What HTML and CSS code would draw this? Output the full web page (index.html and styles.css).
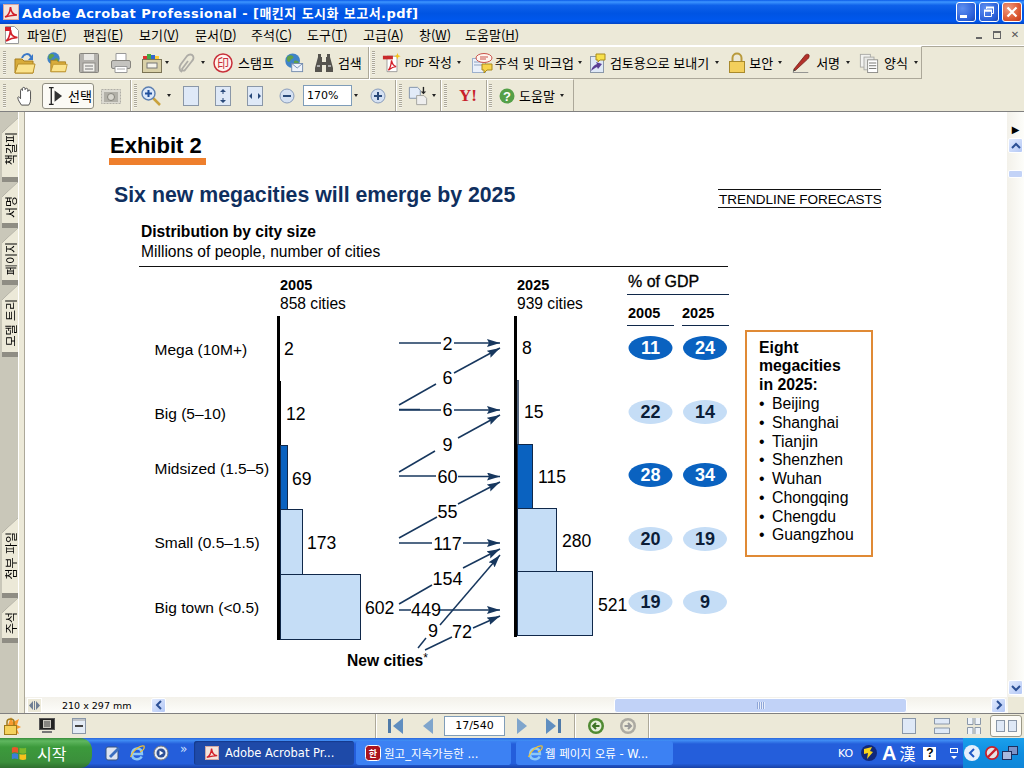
FILE: index.html
```html
<!DOCTYPE html>
<html lang="ko">
<head>
    <meta charset="utf-8">
    <title>Adobe Acrobat Professional</title>
    <link rel="stylesheet" href="styles.css">
</head>
<body>
    <svg class="defs" width="0" height="0">
        <symbol id="acro" viewBox="0 0 16 16">
            <rect x="0.5" y="0.5" width="15" height="15" fill="#f4e4dc" stroke="#d9a9a0"/>
            <path d="M2 13c3-1 5-5 5.500-10 .5 5 3 8 6.500 8-4 0-8 1-12 2z" fill="none" stroke="#d3202a" stroke-width="1.600"/>
        </symbol>
        <symbol id="folder" viewBox="0 0 22 22">
            <path d="M1 7h7l2 2h9v12H1z" fill="#d8ac3a" stroke="#a67c1e"/>
            <path d="M1 21l3-9h17l-2 9z" fill="#fbe38c" stroke="#b98f2a"/>
        </symbol>
        <symbol id="globe" viewBox="0 0 20 20">
            <circle cx="10" cy="10" r="9.500" fill="#3f83c8"/>
            <path d="M4 4c3-2 6-1 7 1s-3 3-4 5-3 2-4 0-1-4 1-6zM12 10c3-1 5 0 6 2-1 3-3 5-5 5-1-2-2-5-1-7z" fill="#5fa04a"/>
        </symbol>
        <symbol id="pagebtn" viewBox="0 0 16 20">
            <rect x="0.500" y="0.500" width="15" height="19" fill="#dfe9f7" stroke="#8a97a8"/>
        </symbol>
        <symbol id="ie" viewBox="0 0 16 16">
            <path d="M3.500 9h9.500c0-3.500-2-5.500-4.800-5.500S3 5.500 3 9s2.200 5.300 5 5.300c2 0 3.800-1 4.700-2.800" fill="none" stroke="#8cc8f8" stroke-width="2.400"/>
            <path d="M1.500 12C4 5 11 0 15 1c1 3-2 5-4 6" fill="none" stroke="#f2c230" stroke-width="1.200"/>
        </symbol>
    </svg>

    <header class="titlebar">
        <svg class="ic16" viewBox="0 0 16 16"><use href="#acro"/></svg>
        <span class="title-text">Adobe Acrobat Professional - [매킨지 도시화 보고서.pdf]</span>
        <div class="win-btns">
            <span class="win-btn"><i class="glyph-min"></i></span>
            <span class="win-btn">
                <svg viewBox="0 0 12 12" width="12" height="12"><path d="M3.500 3V1.500h7v6H9" fill="none" stroke="#fff"/><path d="M3 1.500h8" stroke="#fff" stroke-width="2"/><path d="M1.500 5h7v5.500h-7z" fill="none" stroke="#fff"/><path d="M1 4.500h8" stroke="#fff" stroke-width="2"/></svg>
            </span>
            <span class="win-btn win-close">
                <svg viewBox="0 0 12 12" width="12" height="12"><path d="M1.500 1.500l9 9M10.500 1.500l-9 9" stroke="#fff" stroke-width="2.200"/></svg>
            </span>
        </div>
    </header>

    <nav class="menubar">
        <svg class="menu-logo" viewBox="0 0 14 18">
            <path d="M0.500 0.500h9l4 4v13h-13z" fill="#fff" stroke="#9a9a9a"/>
            <path d="M1 15c3-2 4-6 4.500-11 .5 5 2 7 7 7.500-4 .2-8 1.500-11.500 3.500z" fill="none" stroke="#d3202a" stroke-width="1.700"/>
            <rect x="0" y="1" width="6" height="4" fill="#d3202a"/>
        </svg>
        <a class="menu-item">파일(<u>F</u>)</a>
        <a class="menu-item">편집(<u>E</u>)</a>
        <a class="menu-item">보기(<u>V</u>)</a>
        <a class="menu-item">문서(<u>D</u>)</a>
        <a class="menu-item">주석(<u>C</u>)</a>
        <a class="menu-item">도구(<u>T</u>)</a>
        <a class="menu-item">고급(<u>A</u>)</a>
        <a class="menu-item menu-short">창(<u>W</u>)</a>
        <a class="menu-item">도움말(<u>H</u>)</a>
        <div class="mdi-btns">
            <span class="mdi-btn"><i class="mdi-min"></i></span>
            <span class="mdi-btn"><i class="mdi-restore"></i></span>
            <span class="mdi-btn mdi-x">✕</span>
        </div>
    </nav>

    <!-- 1번째 도구 모음 -->
    <div class="toolbar tb-first">
        <i class="handle"></i>
        <svg class="ic22 ml8" viewBox="0 0 22 22"><use href="#folder"/><path d="M8 6c2-5 7-5 9-1" fill="none" stroke="#3a78c8" stroke-width="2"/><path d="M19 2v6h-5z" fill="#3a78c8"/></svg>
        <svg class="ic22 ml10" viewBox="0 0 22 22"><use href="#globe" width="13" height="13" x="1" y="0"/><use href="#folder" x="4" y="1" width="18" height="21"/></svg>
        <svg class="ic22 ml10" viewBox="0 0 22 22"><rect x="1.500" y="1.500" width="19" height="19" rx="1" fill="#b3b1ac" stroke="#86847e"/><rect x="6" y="2" width="10" height="6" fill="#e9e8e4"/><rect x="5" y="11" width="12" height="9" fill="#f0efeb" stroke="#8f8d87"/><path d="M7 14h8M7 17h8" stroke="#777"/></svg>
        <svg class="ic22 ml10" viewBox="0 0 22 22"><path d="M6 1.500h10v7H6z" fill="#fff" stroke="#999"/><rect x="1.500" y="8.500" width="19" height="8" rx="1.500" fill="#c4c3bf" stroke="#87857f"/><path d="M5 14.500h12v6H5z" fill="#fff" stroke="#999"/><path d="M7 17h8" stroke="#aaa"/></svg>
        <svg class="ic22 ml9" viewBox="0 0 22 22"><path d="M2 4h4v4H2z" fill="#d33"/><path d="M6 2h4v6H6z" fill="#4a4"/><path d="M10 3h4v5h-4z" fill="#36c"/><path d="M14 4h4v4h-4z" fill="#fc3"/><rect x="1.500" y="7.500" width="19" height="13" fill="#d9d0a8" stroke="#7b7355"/><rect x="6" y="11" width="10" height="5" fill="#f6f4ea" stroke="#777"/></svg>
        <i class="caret ml2"></i>
        <svg class="ic18 ml8" viewBox="0 0 18 22"><path d="M5 20c-3-2-3-5-1-8l6-8c2-2 5-2 6 0s0 4-1 5l-7 9c-1 1-3 1-3-1l6-8" fill="none" stroke="#aeaca6" stroke-width="1.800"/></svg>
        <i class="caret ml6"></i>
        <svg class="ic20 ml8" viewBox="0 0 20 20"><circle cx="10" cy="10" r="9" fill="#fff3ee" stroke="#c8303a" stroke-width="1.500"/><text x="10" y="14.500" text-anchor="middle" class="ic-stamp">印</text></svg>
        <span class="lbl ml5">스탬프</span>
        <svg class="ic20 ml10" viewBox="0 0 20 22"><use href="#globe" width="17" height="17"/><rect x="7.500" y="11.500" width="12" height="9" fill="#eef3fb" stroke="#6f89ad"/><path d="M7.500 11.500l6 5 6-5" fill="none" stroke="#6f89ad"/></svg>
        <svg class="ic20 ml10" viewBox="0 0 20 20"><path d="M4 1h3v3h1v5h4V4h1V1h3v3l3 11v4h-7v-7H8v7H1v-4L4 4z" fill="#55534e"/><path d="M3 13h3M14 13h3" stroke="#aaa" stroke-width="2"/></svg>
        <span class="lbl ml4">검색</span>
        <i class="sep ml6"></i>
        <i class="handle ml3"></i>
        <svg class="ic20 ml7" viewBox="0 0 20 22"><path d="M4.500 3.500h11v17h-11z" fill="#fff" stroke="#999"/><rect x="0" y="3" width="11" height="4" fill="#c92a2a"/><path d="M6 19c2-2 3-6 3.500-11 .5 4 2 6 5 7-3 0-6 2-8.500 4z" fill="none" stroke="#d3202a" stroke-width="1.500"/><path d="M16 0l1 2.500 2.500 1-2.500 1-1 2.500-1-2.500-2.500-1 2.500-1z" fill="#f6c21c"/></svg>
        <span class="lbl ml3"><span class="latin">PDF</span> 작성</span>
        <i class="caret ml5"></i>
        <svg class="ic22 ml10" viewBox="0 0 22 22"><rect x="1.500" y="6.500" width="13" height="14" fill="#eaf0fa" stroke="#9db0cc"/><path d="M3 10h9M3 13h9" stroke="#8fa3c0"/><ellipse cx="13" cy="6" rx="8" ry="4.500" fill="#fff4ee" stroke="#c9534a"/><path d="M9 5h8M9 7h6" stroke="#c9534a"/><path d="M11 12h10v6h-5l-3 3v-3h-2z" fill="#f7d34a" stroke="#a98a1c"/></svg>
        <span class="lbl ml2">주석 및 마크업</span>
        <i class="caret ml4"></i>
        <svg class="ic16 pg ml8" viewBox="0 0 16 20"><rect x="0.500" y="3.500" width="13" height="16" fill="#dfe9f7" stroke="#8a97a8"/><path d="M6 1h9v6h-5l-2 2V7H6z" fill="#f7e04a" stroke="#a98a1c"/><path d="M1 18c1-4 3-6 6-7l-1-2 6 2-4 5-1-2c-2 1-4 2-6 4z" fill="#5b3f94"/></svg>
        <span class="lbl ml4">검토용으로 보내기</span>
        <i class="caret ml6"></i>
        <svg class="ic18 ml9" viewBox="0 0 18 22"><path d="M4.500 10V6c0-6 9-6 9 0v4" fill="none" stroke="#b99a3c" stroke-width="2"/><rect x="1.500" y="9.500" width="15" height="11" fill="#f3cf5c" stroke="#a98a2c"/></svg>
        <span class="lbl ml3">보안</span>
        <i class="caret ml5"></i>
        <svg class="ic20 ml9" viewBox="0 0 20 22"><path d="M2 18L15 2c1-1 4-1 4 1s-1 3-2 4L4 19z" fill="#b3312a" stroke="#6e1a14" stroke-width=".800"/><path d="M2 18l-1 3 3-2z" fill="#333"/><path d="M1 21.500h17" stroke="#888"/></svg>
        <span class="lbl ml5">서명</span>
        <i class="caret ml6"></i>
        <svg class="ic20 ml9" viewBox="0 0 20 22"><rect x="0.500" y="1.500" width="11" height="14" fill="#f2f2f0" stroke="#a9a9a5"/><rect x="4.500" y="4.500" width="11" height="14" fill="#e8e8e6" stroke="#a9a9a5"/><rect x="8.500" y="7.500" width="11" height="14" fill="#fff" stroke="#8a8a86"/><path d="M10 11h8M10 14h8M10 17h8" stroke="#6c6c68"/></svg>
        <span class="lbl ml5">양식</span>
        <i class="caret ml6"></i>
    </div>

    <!-- 2번째 도구 모음 -->
    <div class="toolbar tb-second">
        <i class="handle"></i>
        <svg class="ic20 ml10" viewBox="0 0 20 22"><path d="M5 21c-2-3-4-6-4-8s2-1 3 1V5c0-2 2-2 2 0V3c0-2 3-2 3 0v1c0-2 3-2 3 0v2c0-2 3-2 3 0v9c0 3-1 4-2 6z" fill="#fff" stroke="#444"/></svg>
        <span class="select-btn ml6">
            <svg class="ic15" viewBox="0 0 16 20"><path d="M1 1h5M1 19h5M3.500 1v18" stroke="#222" stroke-width="1.400" fill="none"/><path d="M7 4l8 6-8 6z" fill="#333"/></svg>
            <span class="lbl ml5">선택</span>
        </span>
        <svg class="ic20 ml7" viewBox="0 0 20 20"><rect x="0.500" y="3.500" width="19" height="14" fill="#dcdad2" stroke="#b0aea6" stroke-dasharray="2 1"/><rect x="3" y="6" width="14" height="10" fill="#b2b0a8"/><circle cx="10" cy="11" r="3.500" fill="#d8d6ce" stroke="#85837b"/></svg>
        <i class="sep ml9"></i>
        <i class="handle ml3"></i>
        <svg class="ic20 ml4" viewBox="0 0 20 20"><path d="M11 11l8 8" stroke="#c9a23c" stroke-width="2.500"/><circle cx="7.500" cy="7.500" r="6.500" fill="#dbe8fa" stroke="#5c7fb0" stroke-width="1.400"/><path d="M4 7.500h7M7.500 4v7" stroke="#1f4f9c" stroke-width="2"/></svg>
        <i class="caret ml6"></i>
        <svg class="ic16 pg ml12" viewBox="0 0 16 20"><use href="#pagebtn"/></svg>
        <svg class="ic16 pg ml16" viewBox="0 0 16 20"><use href="#pagebtn"/><path d="M8 3l-3 3h6zM8 17l-3-3h6z" fill="#2a4a7a"/><path d="M8 5v3M8 12v3" stroke="#2a4a7a"/></svg>
        <svg class="ic16 pg ml16" viewBox="0 0 16 20"><use href="#pagebtn"/><path d="M2 10l3-3v6zM14 10l-3-3v6z" fill="#2a4a7a"/></svg>
        <svg class="ic16 ml16" viewBox="0 0 16 16"><circle cx="8" cy="8" r="7" fill="#d5e1f2" stroke="#8a9dbb"/><path d="M4 8h8" stroke="#2a4a7a" stroke-width="2"/></svg>
        <span class="zoom-box ml8">170%</span>
        <i class="caret ml2"></i>
        <svg class="ic16 ml12" viewBox="0 0 16 16"><circle cx="8" cy="8" r="7" fill="#d5e1f2" stroke="#8a9dbb"/><path d="M4 8h8M8 4v8" stroke="#2a4a7a" stroke-width="2"/></svg>
        <i class="sep ml9"></i>
        <i class="handle ml3"></i>
        <svg class="ic20 ml6" viewBox="0 0 22 22"><path d="M1.500 1.500h9l3 3v9h-12z" fill="#e2ebf8" stroke="#7d8ea8"/><path d="M9.500 10.500h8l3 3v7h-11z" fill="#eee" stroke="#a0a09a"/><path d="M17 1v6" stroke="#222" stroke-width="1.500"/><path d="M14 6l3 3 3-3z" fill="#222"/></svg>
        <i class="caret ml4"></i>
        <i class="sep ml4"></i>
        <i class="handle ml3"></i>
        <span class="yahoo ml12">Y!</span>
        <i class="sep ml7"></i>
        <i class="handle ml2"></i>
        <svg class="ic16 ml7" viewBox="0 0 16 16"><circle cx="8" cy="8" r="7.500" fill="#55a048"/><text x="8" y="12.500" text-anchor="middle" class="ic-help">?</text></svg>
        <span class="lbl ml4">도움말</span>
        <i class="caret ml5"></i>
    </div>
    <div class="rule"></div>

    <main class="workspace">
        <aside class="rail">
            <div class="rail-group">
                <div class="side-tab tab-book"><span>책갈피</span></div>
                <div class="side-tab tab-sign"><span>서명</span></div>
                <div class="side-tab tab-page"><span>페이지</span></div>
                <div class="side-tab tab-model"><span>모델 트리</span></div>
            </div>
            <div class="rail-group">
                <div class="side-tab tab-file"><span>첨부 파일</span></div>
                <div class="side-tab tab-note"><span>주석</span></div>
            </div>
        </aside>
        <div class="gutter"></div>

        <div class="viewer">
            <div class="viewer-top">
                <svg class="page" viewBox="25 112 982 585" width="982" height="585">
                    <defs>
                        <marker id="arrow" markerWidth="14" markerHeight="10" refX="13" refY="4" orient="auto" markerUnits="userSpaceOnUse">
                            <path d="M0 0l13 4-13 4 2-4z" fill="#17375e"/>
                        </marker>
                    </defs>

                    <text x="110" y="153" class="t-exhibit">Exhibit 2</text>
                    <rect x="109" y="158" width="97" height="7" fill="#ee7f2d"/>
                    <text x="114" y="202" class="t-title">Six new megacities will emerge by 2025</text>

                    <path d="M718 189.500h163M718 207.500h163" stroke="#111"/>
                    <text x="719" y="204" class="t-trend">TRENDLINE FORECASTS</text>

                    <text x="141" y="237" class="t-sub-b">Distribution by city size</text>
                    <text x="141" y="257" class="t-sub">Millions of people, number of cities</text>
                    <path d="M139 266.500h589" stroke="#111"/>

                    <text x="280" y="290" class="t-year">2005</text>
                    <text x="280" y="309" class="t-sub">858 cities</text>
                    <text x="517" y="290" class="t-year">2025</text>
                    <text x="517" y="309" class="t-sub">939 cities</text>

                    <text x="628" y="287" class="t-gdp">% of GDP</text>
                    <path d="M627 294.500h102M627 325.500h47M682 325.500h47" stroke="#10284a"/>
                    <text x="628" y="318" class="t-year">2005</text>
                    <text x="682" y="318" class="t-year">2025</text>

                    <!-- 왼쪽 라벨 -->
                    <text x="154.500" y="355" class="t-cat">Mega (10M+)</text>
                    <text x="154.500" y="419" class="t-cat">Big (5–10)</text>
                    <text x="154.500" y="474" class="t-cat">Midsized (1.5–5)</text>
                    <text x="154.500" y="548" class="t-cat">Small (0.5–1.5)</text>
                    <text x="154.500" y="613" class="t-cat">Big town (&lt;0.5)</text>

                    <!-- 2005 막대 -->
                    <rect class="bar-dark" x="280.500" y="445.500" width="7" height="64"/>
                    <rect class="bar-light" x="280.500" y="509.500" width="22" height="65"/>
                    <rect class="bar-light" x="280.500" y="574.500" width="80" height="65"/>
                    <path d="M278.500 316v324" stroke="#000" stroke-width="3"/>
                    <path d="M280.500 381v64" stroke="#000"/>

                    <!-- 2025 막대 -->
                    <rect x="517.500" y="380.500" width="1" height="64" fill="#fff" stroke="#10284a" stroke-width=".700"/>
                    <rect class="bar-dark" x="517.500" y="444.500" width="15" height="64"/>
                    <rect class="bar-light" x="517.500" y="508.500" width="39" height="63"/>
                    <rect class="bar-light" x="517.500" y="571.500" width="75" height="64"/>
                    <path d="M515.500 316v321" stroke="#000" stroke-width="3"/>

                    <text x="284" y="355" class="t-num">2</text>
                    <text x="286" y="420" class="t-num">12</text>
                    <text x="292" y="485" class="t-num">69</text>
                    <text x="307" y="549" class="t-num">173</text>
                    <text x="365" y="614" class="t-num">602</text>
                    <text x="522" y="354" class="t-num">8</text>
                    <text x="524" y="418" class="t-num">15</text>
                    <text x="538" y="483" class="t-num">115</text>
                    <text x="562" y="547" class="t-num">280</text>
                    <text x="598" y="611" class="t-num">521</text>

                    <!-- 화살표 -->
                    <g class="flow">
                        <path d="M399 343H441"/><path d="M454 343H500" marker-end="url(#arrow)"/>
                        <path d="M399 405L436 384"/><path d="M454 373L500 348" marker-end="url(#arrow)"/>
                        <path d="M399 410H441"/><path d="M399 409.500H420"/><path d="M454 410H500" marker-end="url(#arrow)"/>
                        <path d="M399 472L435 451"/><path d="M458 438L500 415" marker-end="url(#arrow)"/>
                        <path d="M399 476H436"/><path d="M458 476.500H500" marker-end="url(#arrow)"/>
                        <path d="M399 538L437 517"/><path d="M458 504L500 482" marker-end="url(#arrow)"/>
                        <path d="M399 543H432"/><path d="M463 543H500" marker-end="url(#arrow)"/>
                        <path d="M399 604L432 585"/><path d="M463 568L500 549" marker-end="url(#arrow)"/>
                        <path d="M399 610H411"/><path d="M440 610H500" marker-end="url(#arrow)"/>
                        <path d="M418 648L426 638"/><path d="M440 625L500 555" marker-end="url(#arrow)"/>
                        <path d="M425 650L452 637"/><path d="M473 628L500 616" marker-end="url(#arrow)"/>
                    </g>
                    <g class="t-flow">
                        <text x="447.500" y="350">2</text>
                        <text x="447.500" y="384">6</text>
                        <text x="447.500" y="416">6</text>
                        <text x="447.500" y="451">9</text>
                        <text x="447.500" y="483">60</text>
                        <text x="447.500" y="518">55</text>
                        <text x="447.500" y="550">117</text>
                        <text x="447.500" y="585">154</text>
                        <text x="426" y="616">449</text>
                        <text x="433" y="637">9</text>
                        <text x="462" y="638">72</text>
                    </g>
                    <text x="347" y="666" class="t-new">New cities<tspan class="t-star" dy="-4">*</tspan></text>

                    <!-- GDP 타원 -->
                    <g class="dot-dark"><ellipse cx="650.500" cy="348" rx="22" ry="12"/><ellipse cx="705" cy="348" rx="22" ry="12"/><ellipse cx="650.500" cy="475" rx="22" ry="12"/><ellipse cx="705" cy="475" rx="22" ry="12"/></g>
                    <g class="dot-light"><ellipse cx="650.500" cy="412" rx="22" ry="12"/><ellipse cx="705" cy="412" rx="22" ry="12"/><ellipse cx="650.500" cy="539" rx="22" ry="12"/><ellipse cx="705" cy="539" rx="22" ry="12"/><ellipse cx="650.500" cy="602" rx="22" ry="12"/><ellipse cx="705" cy="602" rx="22" ry="12"/></g>
                    <g class="t-dot t-white">
                        <text x="650.500" y="354">11</text><text x="705" y="354">24</text>
                        <text x="650.500" y="481">28</text><text x="705" y="481">34</text>
                    </g>
                    <g class="t-dot">
                        <text x="650.500" y="418">22</text><text x="705" y="418">14</text>
                        <text x="650.500" y="545">20</text><text x="705" y="545">19</text>
                        <text x="650.500" y="608">19</text><text x="705" y="608">9</text>
                    </g>

                    <!-- 메가시티 상자 -->
                    <rect x="746" y="331" width="126" height="225" fill="none" stroke="#e08a35" stroke-width="2"/>
                    <text x="759" y="353" class="t-box-b">Eight</text>
                    <text x="759" y="371" class="t-box-b">megacities</text>
                    <text x="759" y="390" class="t-box-b">in 2025:</text>
                    <g class="t-box">
                        <text x="759" y="409">•</text><text x="772" y="409">Beijing</text>
                        <text x="759" y="428">•</text><text x="772" y="428">Shanghai</text>
                        <text x="759" y="447">•</text><text x="772" y="447">Tianjin</text>
                        <text x="759" y="465">•</text><text x="772" y="465">Shenzhen</text>
                        <text x="759" y="484">•</text><text x="772" y="484">Wuhan</text>
                        <text x="759" y="503">•</text><text x="772" y="503">Chongqing</text>
                        <text x="759" y="522">•</text><text x="772" y="522">Chengdu</text>
                        <text x="759" y="540">•</text><text x="772" y="540">Guangzhou</text>
                    </g>
                </svg>

                <div class="vscroll">
                    <span class="nav-arrow">▶</span>
                    <span class="sb-btn"><svg viewBox="0 0 10 8" width="10" height="8"><path d="M1 6l4-4 4 4" fill="none" stroke="#2b4f94" stroke-width="2"/></svg></span>
                    <span class="vthumb"></span>
                    <span class="sb-btn sb-bottom"><svg viewBox="0 0 10 8" width="10" height="8"><path d="M1 2l4 4 4-4" fill="none" stroke="#2b4f94" stroke-width="2"/></svg></span>
                </div>
            </div>

            <div class="hscroll">
                <span class="split-btn"><svg viewBox="0 0 11 9" width="11" height="9"><path d="M4 0v9L0 4.500zM7 0v9l4-4.500z" fill="#6f7f95"/><path d="M5.500 0v9" stroke="#6f7f95"/></svg></span>
                <span class="page-size">210 x 297 mm</span>
                <span class="sb-btn sb-left"><svg viewBox="0 0 8 10" width="8" height="10"><path d="M6 1L2 5l4 4" fill="none" stroke="#2b4f94" stroke-width="2"/></svg></span>
                <span class="hthumb"><i class="grip"></i></span>
                <span class="sb-btn sb-right"><svg viewBox="0 0 8 10" width="8" height="10"><path d="M2 1l4 4-4 4" fill="none" stroke="#2b4f94" stroke-width="2"/></svg></span>
            </div>
        </div>
    </main>

    <div class="statusbar">
        <svg class="ic18 st-lock" viewBox="0 0 18 20"><path d="M5 9l3-8 2 5 6-3-2 6 4 2-4 2 2 5-6-2-5 3z" fill="#f79a2e"/><path d="M4 9V6c0-4 7-4 7 0v3" fill="none" stroke="#a07a1c" stroke-width="1.500"/><rect x="1.500" y="9.500" width="12" height="9" fill="#f5d25c" stroke="#a07a1c"/></svg>
        <svg class="ic16 st-mon" viewBox="0 0 16 16"><rect x="0.500" y="0.500" width="15" height="11" fill="#222" stroke="#555"/><rect x="4" y="2" width="8" height="8" fill="#c9c7bf"/><path d="M5 4h6M5 6h6M5 8h6" stroke="#444"/><path d="M3 14h10" stroke="#777" stroke-width="2"/></svg>
        <svg class="ic14 st-doc" viewBox="0 0 14 16"><rect x="0.500" y="0.500" width="13" height="15" fill="#e4ecf6" stroke="#8a97a8"/><path d="M3 8h8" stroke="#444" stroke-width="2"/><path d="M1 2h12" stroke="#999"/></svg>

        <i class="sep st-sep1"></i>
        <svg class="ic16 st-first" viewBox="0 0 16 16"><rect x="0" y="1" width="3" height="14" fill="#4f7aa8"/><path d="M15 0v16L5 8z" fill="#5f8ec0"/></svg>
        <svg class="ic10 st-prev" viewBox="0 0 10 16"><path d="M10 0v16L0 8z" fill="#7fa5cc"/></svg>
        <span class="page-box">17/540</span>
        <svg class="ic10 st-next" viewBox="0 0 10 16"><path d="M0 0v16l10-8z" fill="#7fa5cc"/></svg>
        <svg class="ic16 st-last" viewBox="0 0 16 16"><path d="M1 0v16l10-8z" fill="#5f8ec0"/><rect x="13" y="1" width="3" height="14" fill="#4f7aa8"/></svg>
        <i class="sep st-sep2"></i>
        <svg class="ic16 st-back" viewBox="0 0 16 16"><circle cx="8" cy="8" r="8" fill="#4f8a32"/><circle cx="8" cy="8" r="5.500" fill="#e6f0dc"/><path d="M11.500 8H6M8 5L5 8l3 3" fill="none" stroke="#3d7426" stroke-width="2"/></svg>
        <svg class="ic16 st-fwd" viewBox="0 0 16 16"><circle cx="8" cy="8" r="8" fill="#acaaa2"/><circle cx="8" cy="8" r="5.500" fill="#ece9d8"/><path d="M4.500 8H10M8 5l3 3-3 3" fill="none" stroke="#999" stroke-width="2"/></svg>
        <i class="sep st-sep3"></i>

        <svg class="ic14 st-v1" viewBox="0 0 14 16"><rect x="0.500" y="0.500" width="13" height="15" fill="#dfe9f7" stroke="#8a97a8"/></svg>
        <svg class="ic16 st-v2" viewBox="0 0 16 16"><path d="M1 .5h14M1 15.500h14M.5 0v6h15V0M.5 16v-6h15v6" fill="#dfe9f7" stroke="#8a97a8"/></svg>
        <svg class="ic14 st-v3" viewBox="0 0 14 16"><path d="M.5 0v6.500h5.500V0M8 0v6.500h5.500V0M.5 16V9.500h5.500V16M8 16V9.500h5.500V16" fill="#eef3fa" stroke="#8a97a8"/></svg>
        <span class="view-facing"><i></i><i></i></span>
    </div>

    <footer class="taskbar">
        <div class="start-btn">
            <svg class="ic16" viewBox="0 0 18 18"><path d="M1 3c2-1 4-1 7 0v6c-3-1-5-1-7 0z" fill="#e8562a"/><path d="M9.500 3c2 1 5 1 7.500 0v6c-2 1-5 1-7.500 0z" fill="#7ab92c"/><path d="M1 10c2-1 4-1 7 0v6c-3-1-5-1-7 0z" fill="#3c7ed8"/><path d="M9.500 10c2 1 5 1 7.500 0v6c-2 1-5 1-7.500 0z" fill="#f6c21c"/></svg>
            <span>시작</span>
        </div>
        <div class="quick">
            <svg class="ic16" viewBox="0 0 16 16"><rect x="1" y="2" width="12" height="13" rx="2" fill="#dbe4f2" stroke="#36537f"/><path d="M4 11L13 2l2 2-9 9z" fill="#3a6fc0"/></svg>
            <svg class="ic16" viewBox="0 0 16 16"><use href="#ie"/></svg>
            <svg class="ic16" viewBox="0 0 16 16"><circle cx="8" cy="8" r="7" fill="#e8edf5" stroke="#777"/><circle cx="8" cy="8" r="4.500" fill="#2c4f96"/><path d="M6.500 5.500v5l4-2.500z" fill="#fff"/></svg>
            <span class="chev">»</span>
        </div>
        <div class="task-btn task-active">
            <svg class="ic14" viewBox="0 0 16 16"><use href="#acro"/></svg>
            <span>Adobe Acrobat Pr...</span>
        </div>
        <div class="task-btn task-second">
            <svg class="ic16" viewBox="0 0 16 16"><rect x="0.500" y="0.500" width="15" height="15" rx="3" fill="#a9141e" stroke="#fff"/><text x="8" y="12" text-anchor="middle" class="ic-hwp">한</text></svg>
            <span>원고_지속가능한 ...</span>
        </div>
        <div class="task-btn task-third">
            <svg class="ic16" viewBox="0 0 16 16"><use href="#ie"/></svg>
            <span>웹 페이지 오류 - W...</span>
        </div>
        <div class="ime">
            <span class="ime-ko">KO</span>
            <svg class="ic16" viewBox="0 0 16 16"><circle cx="8" cy="8" r="8" fill="#10287a"/><path d="M3 4l8-2-2 4 3 1-6 7 1-6-4 1z" fill="#f6d21c"/></svg>
            <span class="ime-a">A</span>
            <span class="ime-han">漢</span>
            <span class="ime-help">?</span>
            <span class="ime-mini"><i></i><b></b></span>
        </div>
        <div class="tray">
            <span class="tray-chev"><svg viewBox="0 0 8 10" width="8" height="10"><path d="M6 1L2 5l4 4" fill="none" stroke="#1f57c4" stroke-width="2"/></svg></span>
            <svg class="ic14 tr-block" viewBox="0 0 16 16"><circle cx="8" cy="8" r="7" fill="#e4e4e4" stroke="#c9202a" stroke-width="2"/><path d="M3 13L13 3" stroke="#c9202a" stroke-width="2.500"/></svg>
            <svg class="ic16 tr-net" viewBox="0 0 16 16"><rect x="6.500" y="1.500" width="9" height="8" fill="#7c93c8" stroke="#1d2e5e"/><rect x="0.500" y="6.500" width="9" height="8" fill="#a7b8de" stroke="#1d2e5e"/></svg>
        </div>
    </footer>
</body>
</html>
```

FILE: styles.css
```css
/* 기본 */
* {
    box-sizing: border-box;
}

html, body {
    margin: 0;
    padding: 0;
    width: 1024px;
    height: 768px;
    overflow: hidden;
}

body {
    display: flex;
    flex-direction: column;
    background-color: #ece9d8;
    font-family: "Noto Sans CJK KR", "DejaVu Sans", sans-serif;
    font-size: 13px;
    color: #000;
}

.defs {
    position: absolute;
}

svg {
    display: block;
    flex: none;
}

i {
    display: block;
    flex: none;
}

.ic10 { width: 10px; height: 16px; }
.ic14 { width: 14px; height: 16px; }
.ic15 { width: 15px; height: 20px; }
.ic16 { width: 16px; height: 16px; }
.ic16.pg { height: 20px; }
.ic18 { width: 18px; height: 22px; }
.ic20 { width: 20px; height: 20px; }
.ic22 { width: 22px; height: 22px; }

.ml2 { margin-left: 2px; }
.ml3 { margin-left: 3px; }
.ml4 { margin-left: 4px; }
.ml5 { margin-left: 5px; }
.ml6 { margin-left: 6px; }
.ml7 { margin-left: 7px; }
.ml8 { margin-left: 8px; }
.ml9 { margin-left: 9px; }
.ml10 { margin-left: 10px; }
.ml12 { margin-left: 12px; }
.ml16 { margin-left: 16px; }

/* 제목 표시줄 */
.titlebar {
    display: flex;
    align-items: center;
    height: 24px;
    padding-left: 3px;
    background: linear-gradient(#0a5ae8 0, #3d95ff 8%, #0f62ea 22%, #0054e3 55%, #0058ee 88%, #0344c4 100%);
    color: #fff;
}

.title-text {
    margin-left: 3px;
    font-family: "DejaVu Sans", "Noto Sans CJK KR", sans-serif;
    font-size: 13px;
    font-weight: bold;
    letter-spacing: .45px;
    white-space: nowrap;
}

.win-btns {
    display: flex;
    gap: 3px;
    margin-left: auto;
    margin-right: 2px;
}

.win-btn {
    display: flex;
    align-items: center;
    justify-content: center;
    width: 20px;
    height: 20px;
    border: 1px solid #fff;
    border-radius: 3px;
    background: radial-gradient(circle at 30% 30%, #5f8ff0, #2a5fd8 70%, #1d47b0);
}

.win-close {
    background: radial-gradient(circle at 30% 30%, #ef9a80, #dc5a34 60%, #c43a1c);
}

.glyph-min {
    width: 7px;
    height: 3px;
    margin: 9px 6px 0 0;
    background-color: #fff;
}

/* 메뉴 */
.menubar {
    display: flex;
    align-items: center;
    height: 22px;
    padding-left: 5px;
    border-bottom: 1px solid #fff;
    box-shadow: 0 1px 0 #aca899;
}

.menu-logo {
    width: 14px;
    height: 18px;
}

.menu-item {
    width: 56px;
    white-space: nowrap;
}

.menu-item:first-of-type {
    margin-left: 8px;
}

.menu-short {
    width: 46px;
}

.mdi-btns {
    display: flex;
    gap: 2px;
    margin-left: auto;
}

.mdi-btn {
    display: flex;
    align-items: center;
    justify-content: center;
    width: 16px;
    height: 16px;
    color: #555;
    font-size: 10px;
    font-family: "DejaVu Sans", sans-serif;
    font-weight: bold;
}

.mdi-min {
    width: 6px;
    height: 2px;
    margin-top: 7px;
    background-color: #666;
}

.mdi-restore {
    width: 8px;
    height: 8px;
    border: 1px solid #666;
    border-top-width: 2px;
}

.mdi-x {
    margin-right: 1px;
}

/* 도구 모음 */
.toolbar {
    display: flex;
    align-items: center;
    height: 33px;
    padding-left: 3px;
    border-top: 1px solid #fff;
    border-right: 1px solid #aca899;
    border-bottom: 1px solid #aca899;
    white-space: nowrap;
}

.tb-first {
    width: 922px;
}

.tb-second {
    width: 574px;
    height: 32px;
    border-bottom: 0;
}

.rule {
    flex: none;
    height: 1px;
    background-color: #808080;
}

.handle {
    width: 3px;
    height: 24px;
    background: repeating-linear-gradient(#aca899 0 1px, #f5f4ec 1px 2px);
}

.sep {
    width: 1px;
    height: 32px;
    background-color: #aca899;
    box-shadow: 1px 0 0 #fff;
}

.caret {
    width: 0;
    height: 0;
    border-style: solid;
    border-width: 3px 2.5px 0 2.5px;
    border-color: #222 transparent transparent transparent;
}

.lbl {
    flex: none;
    line-height: 16px;
}

.latin {
    font-family: "DejaVu Sans", sans-serif;
    font-size: 10px;
}

.select-btn {
    display: flex;
    align-items: center;
    width: 52px;
    height: 26px;
    padding-left: 5px;
    border: 1px solid #8f8d80;
    border-radius: 3px;
    background-color: #fbfaf5;
}

.select-btn .lbl {
    margin-left: 5px;
}

.zoom-box {
    display: block;
    width: 49px;
    height: 21px;
    padding-left: 3px;
    border: 1px solid #7f9db9;
    background-color: #fff;
    font-family: "DejaVu Sans", sans-serif;
    font-size: 11px;
    line-height: 19px;
}

.yahoo {
    width: 20px;
    font-family: "Liberation Serif", serif;
    font-size: 17px;
    font-weight: bold;
    color: #c8202a;
}

.ic-stamp {
    font-family: "Noto Sans CJK KR", sans-serif;
    font-size: 12px;
    fill: #c8303a;
}

.ic-help {
    font-family: "Liberation Sans", sans-serif;
    font-size: 13px;
    font-weight: bold;
    fill: #fff;
}

.ic-hwp {
    font-family: "Noto Sans CJK KR", sans-serif;
    font-size: 9px;
    font-weight: bold;
    fill: #fff;
}

/* 작업 영역 */
.workspace {
    display: flex;
    flex: 1;
    min-height: 0;
}

.rail {
    display: flex;
    flex-direction: column;
    justify-content: space-between;
    width: 18px;
    padding: 6px 0 70px 2px;
    background-color: #c9c7b9;
}

.rail-group {
    filter: drop-shadow(0 0 .6px #444);
}

.side-tab {
    display: flex;
    justify-content: center;
    width: 16px;
    padding-top: 14px;
    background: linear-gradient(#ece9d8 calc(100% - 5px), #8f8d84 calc(100% - 5px));
    clip-path: polygon(0 15px, 100% 0, 100% 100%, 0 100%);
}

.side-tab span {
    writing-mode: vertical-rl;
    text-orientation: sideways;
    transform: rotate(180deg);
    height: max-content;
    font-size: 12px;
    line-height: 15px;
    white-space: nowrap;
}

.tab-book { height: 64px; }
.tab-sign { height: 46px; }
.tab-page { height: 57px; }
.tab-model { height: 72px; }
.tab-file { height: 80px; }
.tab-note { height: 45px; }

.gutter {
    width: 7px;
    border-left: 1px solid #fff;
    border-right: 1px solid #aca899;
    background-color: #ece9d8;
}

.viewer {
    display: flex;
    flex-direction: column;
    width: 999px;
    min-width: 0;
}

.viewer-top {
    display: flex;
    height: 585px;
}

.page {
    background-color: #fff;
}

.t-exhibit, .t-title, .t-trend, .t-sub, .t-sub-b, .t-year, .t-gdp,
.t-cat, .t-num, .t-flow, .t-new, .t-dot, .t-box, .t-box-b {
    font-family: "Liberation Sans", Arial, sans-serif;
}

.t-exhibit {
    font-size: 22px;
    font-weight: bold;
}

.t-title {
    font-size: 21.300px;
    font-weight: bold;
    fill: #0f2f5f;
}

.t-trend {
    font-size: 13.500px;
}

.t-sub {
    font-size: 15.600px;
}

.t-sub-b {
    font-size: 15.600px;
    font-weight: bold;
}

.t-year {
    font-size: 14.500px;
    font-weight: bold;
}

.t-gdp {
    font-size: 16px;
    stroke: #000;
    stroke-width: .3px;
}

.t-cat {
    font-size: 15.500px;
}

.t-num {
    font-size: 17.600px;
}

.t-flow {
    font-size: 18px;
    text-anchor: middle;
}

.t-new {
    font-size: 15.600px;
    font-weight: bold;
}

.t-star {
    font-size: 12px;
    font-weight: normal;
}

.t-dot {
    font-size: 18px;
    font-weight: bold;
    text-anchor: middle;
    fill: #0b1d38;
}

.t-white {
    fill: #fff;
}

.t-box {
    font-size: 15.800px;
}

.t-box-b {
    font-size: 15.800px;
    font-weight: bold;
}

.bar-dark {
    fill: #0a62c0;
    stroke: #10284a;
}

.bar-light {
    fill: #c5ddf6;
    stroke: #10284a;
}

.flow path {
    fill: none;
    stroke: #17375e;
    stroke-width: 1.500;
}

.dot-dark {
    fill: #0a62c0;
}

.dot-light {
    fill: #c5ddf6;
}

/* 스크롤 막대 */
.vscroll {
    display: flex;
    flex-direction: column;
    align-items: center;
    flex: 1;
    padding-top: 10px;
    background: linear-gradient(90deg, #f3f1ea, #fdfdfa);
}

.nav-arrow {
    height: 16px;
    font-family: "DejaVu Sans", sans-serif;
    font-size: 10px;
    line-height: 15px;
}

.sb-btn {
    display: flex;
    align-items: center;
    justify-content: center;
    flex: none;
    width: 15px;
    height: 15px;
    border: 1px solid #fff;
    border-radius: 2px;
    background: linear-gradient(135deg, #e1eafe, #b4c8f5);
}

.sb-bottom {
    margin-top: auto;
    margin-bottom: 2px;
}

.vthumb {
    width: 15px;
    height: 8px;
    margin-top: 17px;
    border: 1px solid #fff;
    border-radius: 2px;
    background-color: #c3d3f7;
}

.hscroll {
    display: flex;
    align-items: center;
    height: 16px;
    width: 983px;
    padding-left: 2px;
    background: linear-gradient(#f3f1ea, #fdfdfa);
}

.split-btn {
    display: flex;
    align-items: center;
    justify-content: center;
    width: 15px;
    height: 15px;
    background-color: #ece9d8;
    border: 1px solid #fff;
}

.page-size {
    width: 109px;
    padding-left: 20px;
    font-family: "DejaVu Sans", sans-serif;
    font-size: 9.500px;
    white-space: nowrap;
}

.sb-left {
    margin-left: 0;
}

.hthumb {
    display: flex;
    align-items: center;
    justify-content: center;
    width: 293px;
    height: 15px;
    margin-left: 448px;
    border: 1px solid #fff;
    border-radius: 3px;
    background-color: #c1d2f7;
}

.grip {
    width: 8px;
    height: 7px;
    background: repeating-linear-gradient(90deg, #8fa6d8 0 1px, #e6edfc 1px 2px);
}

.sb-right {
    margin-left: 84px;
}

/* 상태 표시줄 */
.statusbar {
    display: flex;
    align-items: center;
    height: 25px;
    padding-left: 3px;
    border-top: 1px solid #808080;
}

.st-lock { margin-left: 0; height: 20px; }
.st-mon { margin-left: 18px; }
.st-doc { margin-left: 17px; }
.st-sep1 { margin-left: 289px; height: 24px; }
.st-first { margin-left: 12px; }
.st-prev { margin-left: 19px; }
.page-box {
    width: 61px;
    height: 20px;
    margin-left: 11px;
    border: 1px solid #7f9db9;
    background-color: #fff;
    font-family: "DejaVu Sans", sans-serif;
    font-size: 11px;
    line-height: 18px;
    text-align: center;
}
.st-next { margin-left: 12px; }
.st-last { margin-left: 18px; }
.st-sep2 { margin-left: 13px; height: 24px; }
.st-back { margin-left: 13px; }
.st-fwd { margin-left: 16px; }
.st-sep3 { margin-left: 12px; height: 24px; }
.st-v1 { margin-left: 253px; }
.st-v2 { margin-left: 18px; }
.st-v3 { margin-left: 17px; }

.view-facing {
    display: flex;
    gap: 3px;
    align-items: center;
    justify-content: center;
    width: 32px;
    height: 22px;
    margin-left: 9px;
    border: 1px solid #9a9888;
    border-radius: 3px;
    background-color: #fbfaf5;
}

.view-facing i {
    width: 9px;
    height: 12px;
    border: 1px solid #8a97a8;
    background-color: #dfe9f7;
}

/* 작업 표시줄 */
.taskbar {
    display: flex;
    align-items: center;
    height: 30px;
    background: linear-gradient(#2a66dc 0, #3f8cf3 8%, #245edb 20%, #245edb 85%, #1941a5 100%);
    color: #fff;
    font-family: "DejaVu Sans", "Noto Sans CJK KR", sans-serif;
    font-size: 11.500px;
    white-space: nowrap;
}

.start-btn {
    display: flex;
    align-items: center;
    gap: 10px;
    width: 92px;
    height: 100%;
    padding-left: 11px;
    border-radius: 0 12px 12px 0;
    background: linear-gradient(#388e3c 0, #5fb75f 10%, #3c9a3c 30%, #3b8f3b 80%, #2f6f2f 100%);
    font-family: "Noto Sans CJK KR", sans-serif;
    font-size: 16px;
}

.quick {
    display: flex;
    align-items: center;
    gap: 8px;
    width: 102px;
    padding-left: 13px;
}

.chev {
    margin: -8px 0 0 3px;
    font-size: 12px;
    color: #cfe0fb;
}

.task-btn {
    display: flex;
    align-items: center;
    gap: 6px;
    height: 24px;
    padding-left: 11px;
    border-radius: 3px;
}

.task-active {
    width: 160px;
    background-color: #1e4aa8;
    box-shadow: inset 1px 1px 1px #143a8c;
}

.task-second {
    width: 155px;
    margin-left: 2px;
    padding-left: 9px;
    background-color: #3c81f3;
}

.task-second span {
    margin-left: -3px;
}

.task-third {
    width: 157px;
    margin-left: 5px;
    background-color: #3c81f3;
}

.task-third span {
    margin-left: -4px;
}

.ime {
    display: flex;
    align-items: center;
    margin-left: 165px;
    width: 135px;
}

.ime-ko {
    width: 23px;
    font-size: 11px;
}

.ime-a {
    margin-left: 5px;
    font-family: "Liberation Sans", sans-serif;
    font-size: 20px;
    font-weight: bold;
}

.ime-han {
    margin-left: 3px;
    font-family: "Noto Sans CJK KR", sans-serif;
    font-size: 16px;
}

.ime-help {
    width: 13px;
    height: 13px;
    margin-left: 8px;
    background-color: #fff;
    color: #000;
    font-family: "Liberation Sans", sans-serif;
    font-size: 12px;
    font-weight: bold;
    line-height: 13px;
    text-align: center;
}

.ime-mini {
    display: flex;
    flex-direction: column;
    align-items: center;
    gap: 3px;
    margin-left: 14px;
}

.ime-mini i {
    width: 8px;
    height: 5px;
    border: 1px solid #fff;
}

.ime-mini b {
    width: 0;
    height: 0;
    border-style: solid;
    border-width: 3px 3px 0 3px;
    border-color: #fff transparent transparent transparent;
}

.tray {
    display: flex;
    align-items: center;
    flex: 1;
    height: 100%;
    margin-left: -10px;
    padding-left: 1px;
    background: linear-gradient(#1aa0ec 0, #0f8ee0 50%, #0f85d8 100%);
}

.tray-chev {
    display: flex;
    align-items: center;
    justify-content: center;
    width: 16px;
    height: 16px;
    border-radius: 50%;
    background-color: #e6effc;
}

.tr-block {
    margin-left: 5px;
}

.tr-net {
    margin-left: 3px;
}
```
